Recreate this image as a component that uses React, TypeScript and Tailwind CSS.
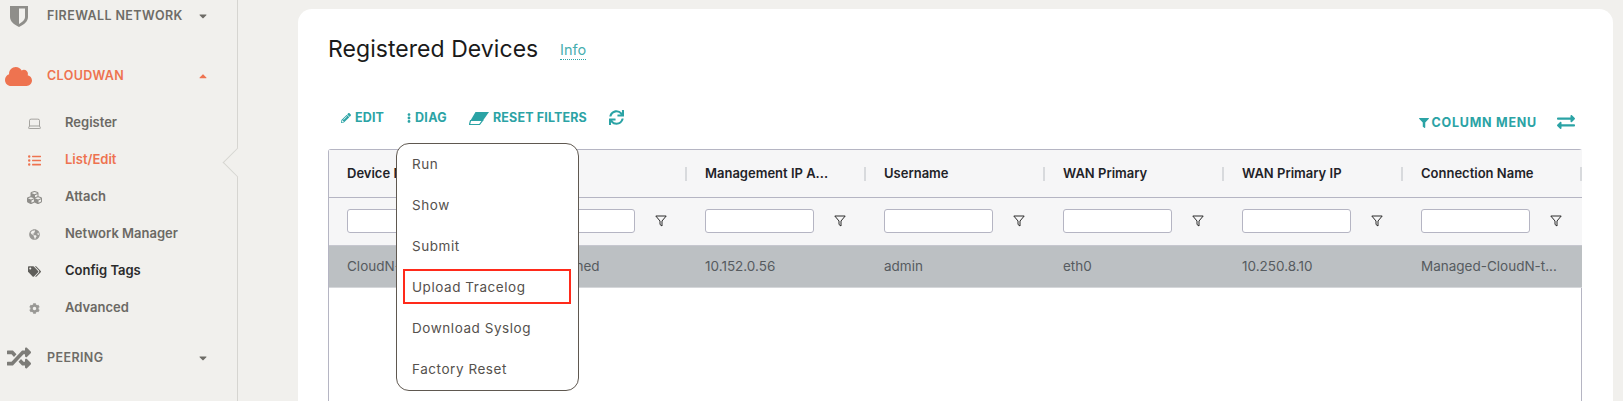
import { ReactNode } from "react";
import {
  FaCaretDown,
  FaCaretUp,
  FaCloud,
  FaCog,
  FaCubes,
  FaEllipsisV,
  FaExchangeAlt,
  FaFilter,
  FaGlobeAmericas,
  FaListUl,
  FaPencilAlt,
  FaRandom,
  FaSync,
  FaTags,
} from "react-icons/fa";
import { Laptop } from "lucide-react";

const columns = [
  { title: "Device Name", value: "CloudN-test" },
  { title: "Status", value: "Unattached" },
  { title: "Management IP A...", value: "10.152.0.56" },
  { title: "Username", value: "admin" },
  { title: "WAN Primary", value: "eth0" },
  { title: "WAN Primary IP", value: "10.250.8.10" },
  { title: "Connection Name", value: "Managed-CloudN-t..." },
];

const subLinks = [
  { label: "Register", icon: <Laptop size={15} strokeWidth={1.25} className="text-[#8f8e8a]" />, color: "text-[#6b6964]" },
  { label: "List/Edit", icon: <FaListUl className="text-[13px] text-[#ee7350]" />, color: "text-[#ee7350]" },
  { label: "Attach", icon: <FaCubes className="text-[15px] text-[#8f8e8a]" />, color: "text-[#6b6964]" },
  { label: "Network Manager", icon: <FaGlobeAmericas className="text-[11px] text-[#999895]" />, color: "text-[#6b6964]" },
  { label: "Config Tags", icon: <FaTags className="text-[13px] text-[#5f5e5a]" />, color: "text-[#2b2b2b]" },
  { label: "Advanced", icon: <FaCog className="text-[11px] text-[#999895]" />, color: "text-[#6b6964]" },
];

const menuItems = ["Run", "Show", "Submit", "Upload Tracelog", "Download Syslog", "Factory Reset"];

const ShieldIcon = () => (
  <svg width="18" height="21" viewBox="0 0 18 21">
    <path d="M0 0h18v11c0 4.500-4 7.500-9 10-5-2.500-9-5.500-9-10z" fill="#8f8e8a" />
    <path d="M9 2.500h6v8.500c0 3-3 5-6 7z" fill="#f1f0ed" />
  </svg>
);

const EraserIcon = () => (
  <svg width="20" height="13" viewBox="0 0 20 13" className="mr-[4px]">
    <path d="M6.500 0H20l-6 8.500H1.500z" fill="#2ba3a5" />
    <path d="M1.500 8.500h12L10.500 12.500H0.500z" fill="none" stroke="#2ba3a5" strokeWidth="1.200" />
  </svg>
);

const FunnelIcon = () => (
  <svg width="12" height="12" viewBox="0 0 12 12" fill="none" stroke="#2a2a2a" strokeWidth="1">
    <path d="M0.800 1h10.400L7 6v5L5 9.500V6z" strokeLinejoin="round" />
  </svg>
);

const MainLink = ({
  label,
  icon,
  active,
  open,
  className,
}: {
  label: string;
  icon: ReactNode;
  active?: boolean;
  open?: boolean;
  className?: string;
}) => (
  <div
    className={`flex h-[30px] items-center text-[12.500px] font-semibold ${
      active ? "text-[#ee7350]" : "text-[#6e6c67]"
    } ${className}`}
  >
    <div className="flex w-[47px] justify-center pr-[14px] pl-[4px]">{icon}</div>
    <span className="w-[150px] tracking-[0.4px]">{label}</span>
    {open ? <FaCaretUp className="text-[12px]" /> : <FaCaretDown className="text-[12px]" />}
  </div>
);

const ToolButton = ({ icon, label, className }: { icon: ReactNode; label: string; className?: string }) => (
  <div className={`flex items-center text-[12.500px] font-bold text-[#2ba3a5] ${className}`}>
    {icon}
    <span>{label}</span>
  </div>
);

const Sidebar = () => (
  <aside className="relative h-full w-[238px] shrink-0 border-r border-[#d6d5d1] pt-[1px] font-['Inter',sans-serif]">
    <MainLink label="FIREWALL NETWORK" icon={<ShieldIcon />} />
    <MainLink
      label="CLOUDWAN"
      icon={<FaCloud className="text-[27px]" />}
      active
      open
      className="mt-[30px]"
    />
    <ul className="mt-[13.500px]">
      {subLinks.map((link) => (
        <li key={link.label} className={`flex h-[37px] items-center text-[13px] font-semibold ${link.color}`}>
          <div className="flex w-[65px] justify-center pl-[11px] pr-[8px]">{link.icon}</div>
          <span>{link.label}</span>
        </li>
      ))}
    </ul>
    <MainLink
      label="PEERING"
      icon={<FaRandom className="text-[24px] text-[#7d7c78]" />}
      className="mt-[16.500px]"
    />
    <div className="absolute top-[151.500px] left-[227px] h-[21px] w-[21px] rotate-45 border-b border-l border-[#d6d5d1] bg-[#f1f0ed]" />
  </aside>
);

const DeviceTable = () => (
  <div className="ml-[30px] mt-[16px] w-[1254px] rounded-t-[3px] border border-b-0 border-[#b5b5c3] font-['Inter',sans-serif]">
    <div className="grid grid-cols-[repeat(7,179px)]">
      {columns.map((col) => (
        <div
          key={col.title}
          className="relative flex h-[48px] items-center border-b border-[#b5b5c3] bg-[#f6f6f7] pl-[18px] text-[13px] font-semibold text-[#1f2328]"
        >
          {col.title}
          <span className="absolute top-[17px] right-0 h-[14px] w-[2px] bg-[#d8dadd]" />
        </div>
      ))}
      {columns.map((col) => (
        <div
          key={col.title}
          className="flex h-[48px] items-center gap-[20px] border-b border-[#c6c7cf] bg-[#f6f6f7] pl-[18px]"
        >
          <input className="h-[24px] w-[109px] rounded-[3px] border border-[#b5b5c3] bg-white" />
          <FunnelIcon />
        </div>
      ))}
      {columns.map((col) => (
        <div
          key={col.title}
          className="flex h-[42px] items-center border-b border-[#d5d7da] bg-[#bcc0c3] pl-[18px] text-[13.500px] text-[#565b5f]"
        >
          {col.value}
        </div>
      ))}
    </div>
    <div className="h-[120px] bg-white" />
  </div>
);

const DiagMenu = () => (
  <ul className="absolute top-[143px] left-[396px] w-[183px] rounded-[13px] border border-[#5f5850] bg-white font-['Inter',sans-serif] text-[13.500px] text-[#55514d]">
    {menuItems.map((item) => (
      <li key={item} className="flex h-[41px] items-center pl-[15px] tracking-[0.55px]">
        {item}
      </li>
    ))}
    <li className="absolute top-[125px] left-[6px] h-[35px] w-[168px] border-2 border-[#ff2a1a]" />
  </ul>
);

const App = () => {
  return (
    <div className="relative flex h-[401px] w-[1623px] overflow-hidden bg-[#f1f0ed]">
      <Sidebar />
      <main className="ml-[60px] mt-[9px] h-[500px] w-[1315px] rounded-[14px] bg-white font-['Inter',sans-serif]">
        <div className="flex items-center pl-[30px] pt-[25px]">
          <h1 className="w-[232px] text-[23px] font-normal leading-[30px] tracking-[0.05px] text-[#1a1a1a]">Registered Devices</h1>
          <span className="mt-[2px] border-b border-dotted border-[#2ba3a5] text-[14.500px] leading-[18px] text-[#47aeb0]">Info</span>
        </div>
        <div className="flex items-start pl-[43px] pt-[45px] pr-[38px]">
          <ToolButton icon={<FaPencilAlt className="mr-[4px] text-[10px]" />} label="EDIT" className="w-[66px] tracking-[0.15px]" />
          <ToolButton icon={<FaEllipsisV className="mr-[1px] -ml-[3px] text-[10px]" />} label="DIAG" className="w-[62px] tracking-[0.3px]" />
          <ToolButton icon={<EraserIcon />} label="RESET FILTERS" className="w-[140px] tracking-[0.15px]" />
          <FaSync className="mt-[1px] text-[15px] text-[#2ba3a5]" />
          <ToolButton
            icon={<FaFilter className="mr-[3px] text-[10px]" />}
            label="COLUMN MENU"
            className="ml-auto mt-[5px] tracking-[0.75px]"
          />
          <FaExchangeAlt className="ml-[20px] mt-[4px] text-[18px] text-[#2ba3a5]" />
        </div>
        <DeviceTable />
      </main>
      <DiagMenu />
    </div>
  );
};

export default App;
